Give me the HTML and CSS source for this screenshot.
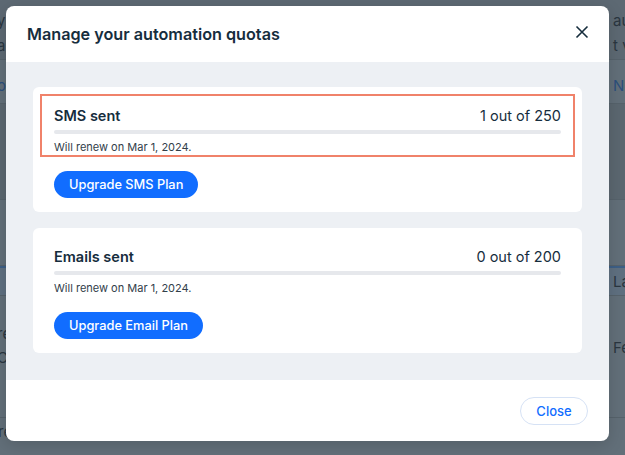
FILE: index.html
```html
<!DOCTYPE html>
<html lang="en">
<head>
    <meta charset="UTF-8">
    <meta name="viewport" content="width=device-width, initial-scale=1.0">
    <title>Automation quotas</title>
    <link rel="stylesheet" href="styles.css">
</head>
<body>
    <div class="page">
      <div class="page-row top">
        <span class="left">y<br>a</span>
        <span class="right">au<br>t vi</span>
      </div>
      <div class="page-row tabs">
        <span class="left link">o</span>
        <span class="right link">No</span>
      </div>
      <div class="page-row dark"></div>
      <div class="page-row plain"></div>
      <div class="page-row head">
        <span class="left"></span>
        <span class="right">Las</span>
      </div>
      <div class="page-row item">
        <span class="left">re<br>C</span>
        <span class="right">Feb</span>
      </div>
      <div class="page-row last">
        <span class="left">received for my Form</span>
        <span class="right"></span>
      </div>
    </div>

    <div class="modal">
      <div class="modal-header">
        <h2>Manage your automation quotas</h2>
        <button type="button" class="close-x" aria-label="Close">
          <svg width="14" height="14" viewBox="0 0 14 14"><path d="M1.5 1.5l11 11M12.5 1.5l-11 11" stroke="#162d3d" stroke-width="1.6" fill="none"/></svg>
        </button>
      </div>

      <div class="modal-body">
        <div class="card">
          <div class="quota highlighted">
            <div class="quota-row">
              <span class="quota-name">SMS sent</span>
              <span class="quota-count">1 out of 250</span>
            </div>
            <div class="bar"></div>
            <p class="renew">Will renew on Mar 1, 2024.</p>
          </div>
          <button type="button" class="upgrade">Upgrade SMS Plan</button>
        </div>

        <div class="card">
          <div class="quota">
            <div class="quota-row">
              <span class="quota-name">Emails sent</span>
              <span class="quota-count">0 out of 200</span>
            </div>
            <div class="bar"></div>
            <p class="renew">Will renew on Mar 1, 2024.</p>
          </div>
          <button type="button" class="upgrade">Upgrade Email Plan</button>
        </div>
      </div>

      <div class="modal-footer">
        <button type="button" class="close-btn">Close</button>
      </div>
    </div>
</body>
</html>
```

FILE: styles.css
```css
* {
  margin: 0;
  padding: 0;
  box-sizing: border-box;
}
body {
  width: 625px;
  height: 455px;
  overflow: hidden;
  font-family: Inter, "Open Sans", sans-serif;
  background-color: #626f79;
  position: relative;
}

/* dimmed page behind the dialog */
.page {
  display: flex;
  flex-direction: column;
  color: #2a3640;
  font-size: 15px;
}
.page-row {
  display: flex;
  justify-content: space-between;
  border-bottom: 1px solid #56626b;
}
.page-row .left {
  margin-left: -3px;
}
.page-row .right {
  margin-right: -8px;
  width: 20px;
  white-space: nowrap;
}
.page-row.top {
  height: 60px;
  padding-top: 8px;
  line-height: 25px;
  background-color: #5d6973;
}
.page-row.tabs {
  height: 44px;
  padding-top: 16px;
}
.link {
  color: #2c4f7c;
}
.page-row.dark {
  height: 96px;
  background-color: #5b6770;
}
.page-row.plain {
  height: 66px;
}
.page-row.head {
  height: 30px;
  padding-top: 4px;
  background-color: #5f7080;
  border-top: 2px solid #3d5f86;
}
.page-row.item {
  height: 122px;
  padding-top: 26px;
  line-height: 24px;
}
.page-row.item .right {
  padding-top: 14px;
}
.page-row.last {
  padding-top: 4px;
  height: 28px;
  border-bottom: none;
}
.page-row.last .left {
  margin-left: -2px;
}

/* dialog */
.modal {
  position: absolute;
  left: 6px;
  top: 6px;
  width: 603px;
  height: 435px;
  background-color: #fff;
  border-radius: 8px;
  overflow: hidden;
  display: flex;
  flex-direction: column;
  box-shadow: 0 4px 16px rgba(0, 0, 0, 0.15);
}
.modal-header {
  height: 56px;
  padding: 0 18px 0 21px;
  display: flex;
  align-items: center;
  justify-content: space-between;
}
.modal-header h2 {
  font-size: 16.2px;
  font-weight: 600;
  color: #162d3d;
}
.close-x {
  background: none;
  border: none;
  width: 18px;
  height: 18px;
  display: flex;
  align-items: center;
  justify-content: center;
  margin-top: -4px;
}
.modal-body {
  flex: 1;
  background-color: #edf0f4;
  padding: 25px 27px;
  display: flex;
  flex-direction: column;
  gap: 16px;
}
.card {
  background-color: #fff;
  border-radius: 6px;
  padding: 7px;
  height: 125px;
  display: flex;
  flex-direction: column;
  align-items: flex-start;
}
.quota {
  align-self: stretch;
  border: 2px solid transparent;
  padding: 9px 12px 1px;
}
.quota.highlighted {
  border-color: #f0826a;
}
.quota-row {
  display: flex;
  justify-content: space-between;
  align-items: center;
  height: 20px;
  color: #162d3d;
  font-size: 14.5px;
}
.quota-name {
  font-weight: 600;
}
.bar {
  margin-top: 5px;
  height: 4px;
  border-radius: 2px;
  background-color: #e6e8ec;
}
.renew {
  margin-top: 6px;
  font-size: 11px;
  line-height: 14px;
  color: #32404a;
}
.upgrade {
  margin: 14px 0 0 14px;
  height: 27px;
  padding: 0 15px;
  border: none;
  border-radius: 14px;
  background-color: #116dff;
  color: #fff;
  font-family: inherit;
  font-size: 12.8px;
  font-weight: 500;
}
.modal-footer {
  height: 61px;
  padding: 0 21px;
  display: flex;
  align-items: center;
  justify-content: flex-end;
}
.close-btn {
  width: 68px;
  height: 28px;
  border: 1px solid #d6e2f5;
  border-radius: 14px;
  background-color: #fff;
  color: #116dff;
  font-family: inherit;
  font-size: 13px;
  font-weight: 500;
}
```
